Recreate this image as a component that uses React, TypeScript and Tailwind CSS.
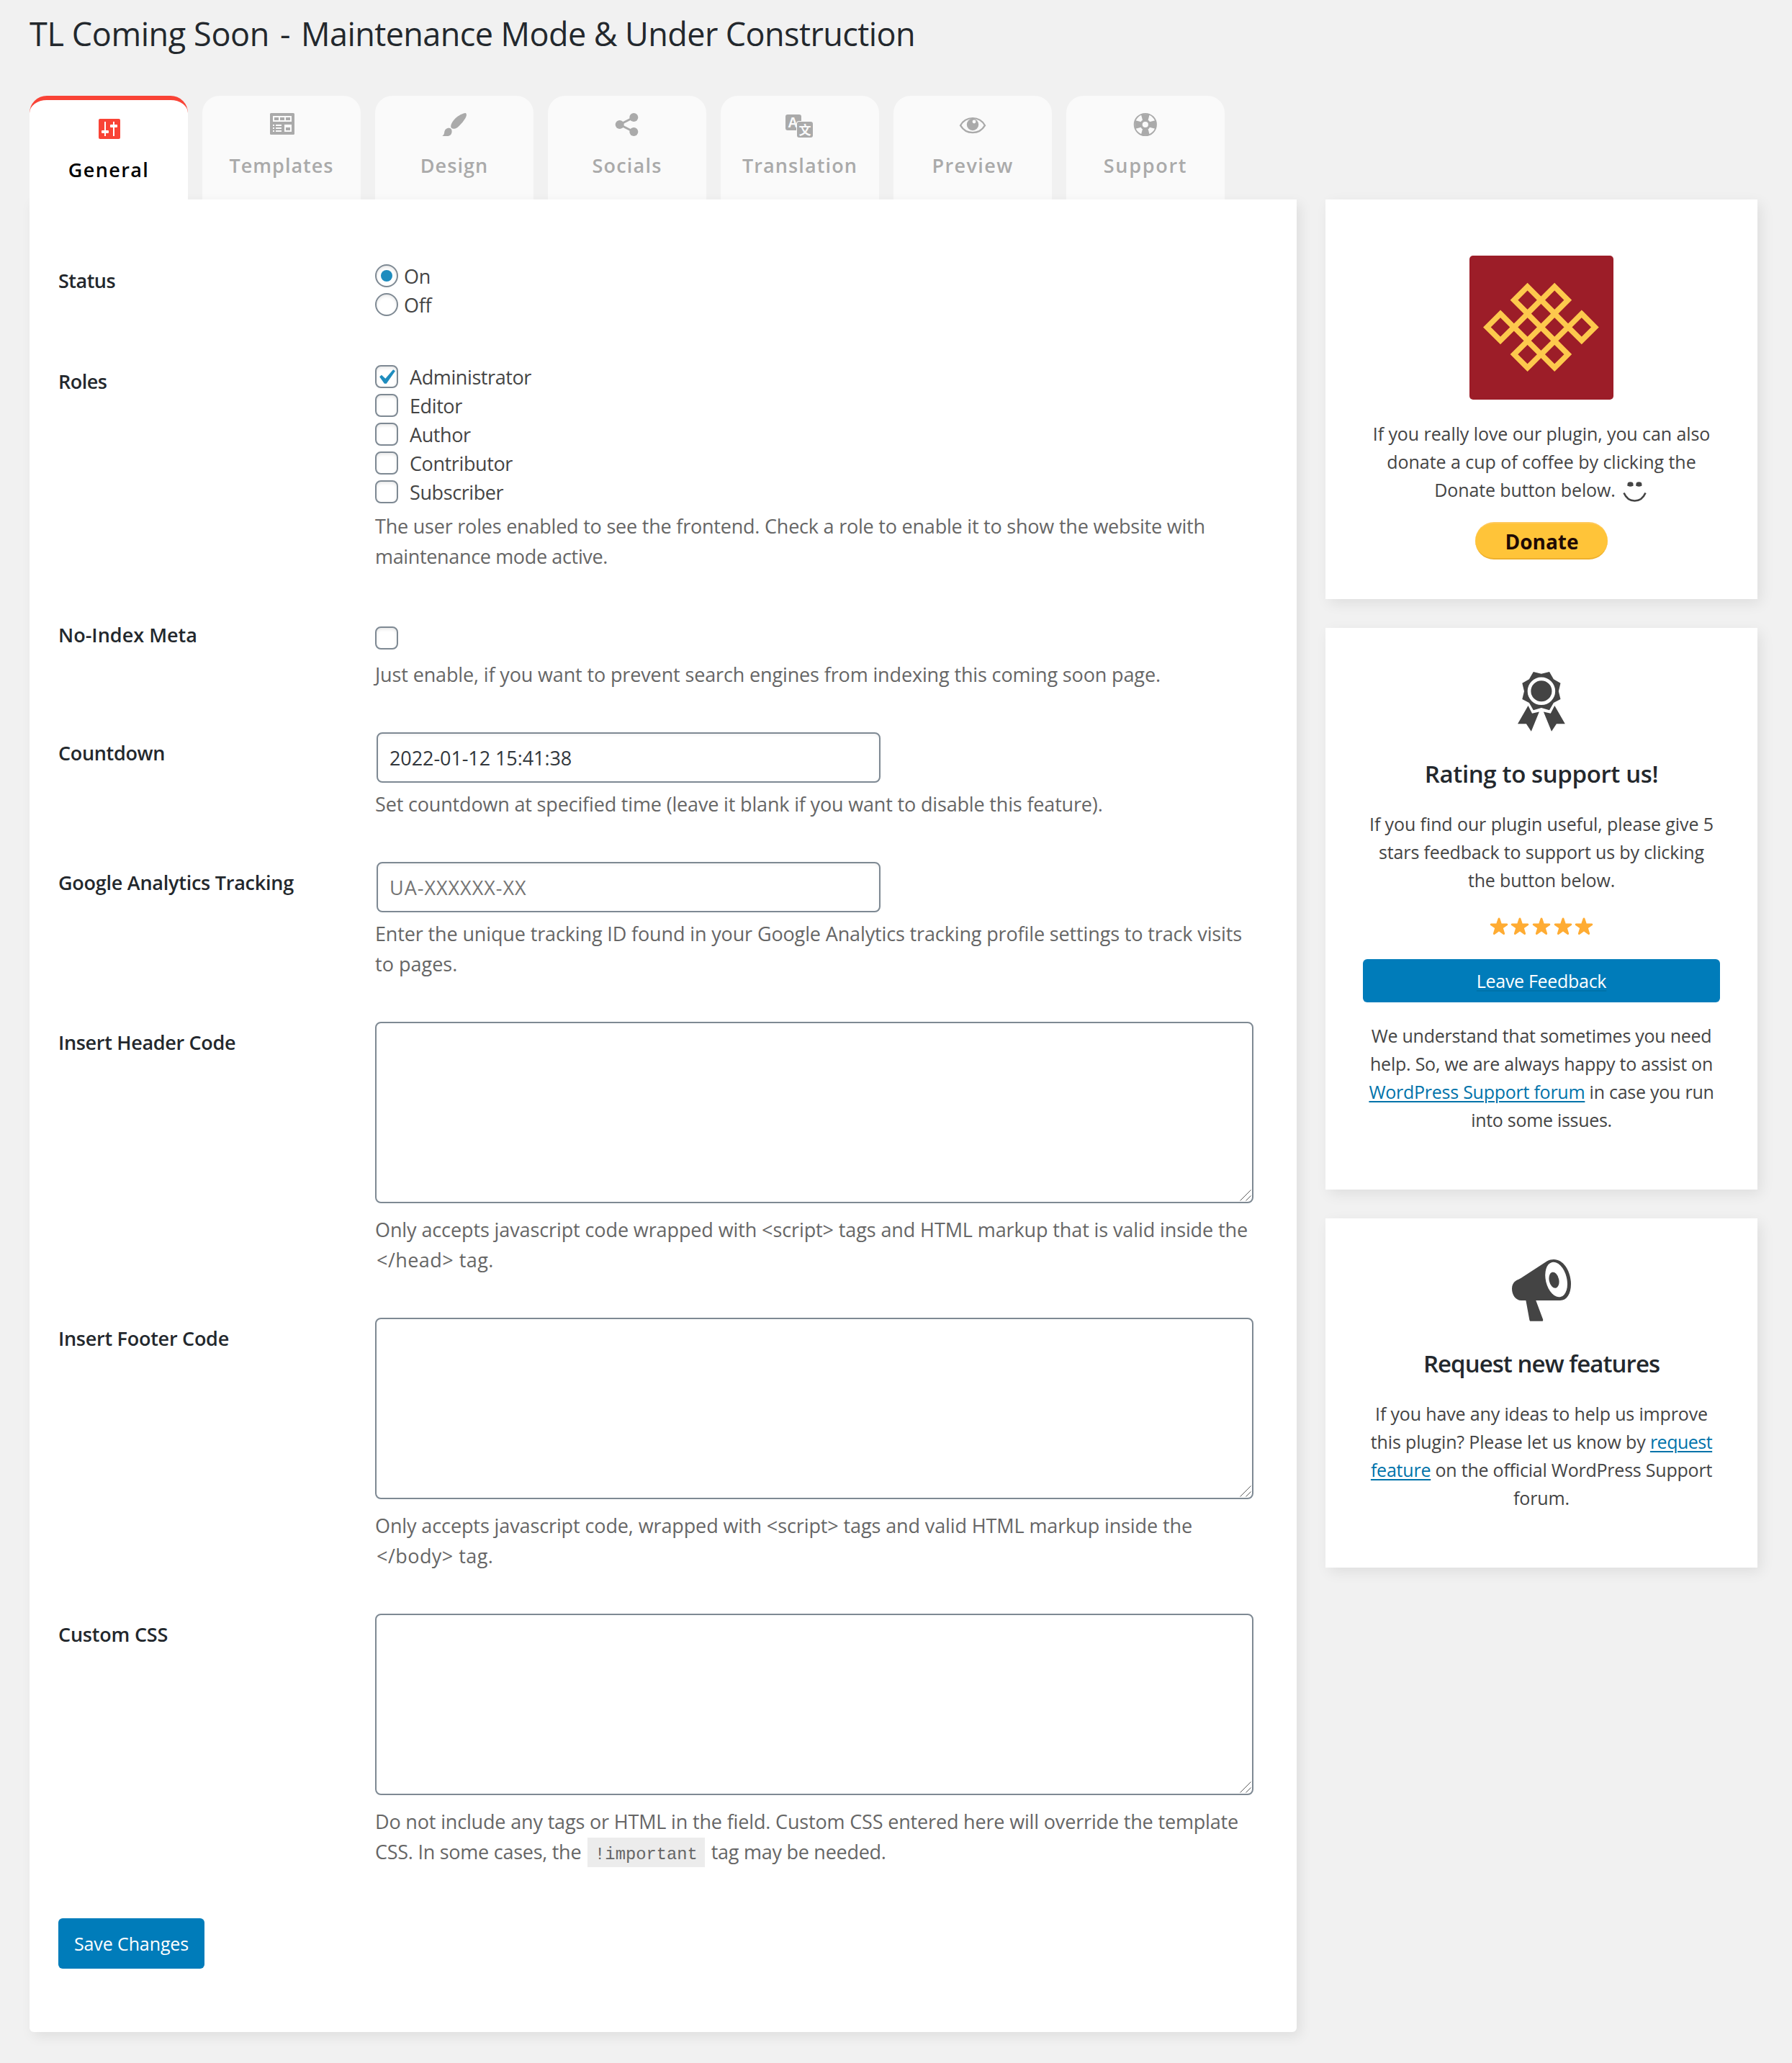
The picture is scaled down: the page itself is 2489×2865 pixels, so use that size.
import type { ReactNode } from "react";

const SHADOW = "shadow-[5px_6px_18px_rgba(0,0,0,0.08)]";

/* ---------- tab icons (40 x 40 grid) ---------- */

function Glyph({ children }: { children: ReactNode }) {
  return (
    <svg viewBox="0 0 40 40" className="size-10 shrink-0" fill="currentColor">
      {children}
    </svg>
  );
}

const SettingsGlyph = () => (
  <Glyph>
    <rect x="6" y="7" width="30" height="28" rx="2" />
    <g fill="#fff">
      <rect x="14" y="11" width="2" height="20" />
      <rect x="10" y="23" width="10" height="4" rx="1" />
      <rect x="26" y="11" width="2" height="20" />
      <rect x="22" y="15" width="10" height="4" rx="1" />
    </g>
  </Glyph>
);

const LayoutGlyph = () => (
  <Glyph>
    <rect x="4" y="5" width="34" height="30" rx="1.5" />
    <rect x="8" y="9" width="26" height="8" fill="#fafafa" />
    <rect x="10" y="11" width="6" height="4" />
    <rect x="18" y="11" width="6" height="4" />
    <rect x="26" y="11" width="6" height="4" />
    <g fill="#fafafa">
      <rect x="8" y="21" width="2" height="2" />
      <rect x="8" y="25" width="2" height="2" />
      <rect x="8" y="29" width="2" height="2" />
      <rect x="12" y="21" width="8" height="2" />
      <rect x="12" y="25" width="8" height="2" />
      <rect x="12" y="29" width="8" height="2" />
      <rect x="24" y="21" width="10" height="10" />
    </g>
    <rect x="26" y="25" width="6" height="4" />
  </Glyph>
);

const BrushGlyph = () => (
  <Glyph>
    <path d="M36.3 5.4c1.3 1.2.6 4.300-1.300 7.300-2 3.200-4.500 6.300-7 8.900-2.300 2.500-4.200 4.400-6.500 5-2.200.5-4.700.2-5.700-1-1-1.300-.7-3.500.3-5.800 1.200-2.700 3.300-5.500 6-8C25.600 8.500 34.500 3.700 36.300 5.400z" />
    <path d="M12.600 25.800c2.300 0 4 1.600 4 4.400 0 4-2.300 6.800-6.600 6.800H3.200c2-1.300 2.800-3 3-5.200.3-3.400 2.800-6 6.400-6z" />
  </Glyph>
);

const ShareGlyph = () => (
  <Glyph>
    <path d="M29.300 11L9.700 21l19.600 10" fill="none" stroke="currentColor" strokeWidth="3" />
    <circle cx="29.300" cy="11" r="6" />
    <circle cx="9.700" cy="21" r="6" />
    <circle cx="29.300" cy="31" r="6" />
  </Glyph>
);

const TranslateGlyph = () => (
  <Glyph>
    <rect x="0" y="7" width="22" height="22" rx="3" />
    <text x="10.300" y="25" textAnchor="middle" fontSize="19.500" fontWeight="700" fontFamily="Liberation Sans, sans-serif" fill="#fafafa">
      A
    </text>
    <rect x="15" y="16" width="24" height="24" rx="4" fill="#fafafa" />
    <rect x="16" y="17" width="22" height="22" rx="3" />
    <text x="27" y="34.500" textAnchor="middle" fontSize="17" fontWeight="700" fontFamily="Noto Sans CJK SC, sans-serif" fill="#fafafa">
      文
    </text>
  </Glyph>
);

const EyeGlyph = () => (
  <Glyph>
    <path d="M3 22.200C6.500 16 12.500 12.200 20 12.200S33.500 16 37 22.200C33.500 28.200 27.500 32.200 20 32.200S6.500 28.200 3 22.200z" fill="none" stroke="currentColor" strokeWidth="2.300" />
    <circle cx="20" cy="21" r="8.200" />
    <circle cx="22" cy="17" r="2.400" fill="#fafafa" />
  </Glyph>
);

const WHEEL = [0, 90, 180, 270];
const SosGlyph = () => (
  <Glyph>
    <circle cx="19.800" cy="21" r="15.200" fill="none" stroke="currentColor" strokeWidth="1.800" />
    {WHEEL.map((a) => (
      <path key={a} d="M13.800 6.500h12l-2.500 9.500h-7z" transform={`rotate(${a} 19.800 21)`} />
    ))}
    <circle cx="19.800" cy="21" r="7.300" />
    <circle cx="19.800" cy="21" r="4.100" fill="#fafafa" />
  </Glyph>
);

const TABS = [
  { label: "General", icon: <SettingsGlyph />, active: true, tracking: "tracking-[1.400px]" },
  { label: "Templates", icon: <LayoutGlyph />, tracking: "tracking-[1px]" },
  { label: "Design", icon: <BrushGlyph />, tracking: "tracking-[1.100px]" },
  { label: "Socials", icon: <ShareGlyph />, tracking: "tracking-[1.200px]" },
  { label: "Translation", icon: <TranslateGlyph />, tracking: "tracking-[1.100px]" },
  { label: "Preview", icon: <EyeGlyph />, tracking: "tracking-[1.400px]" },
  { label: "Support", icon: <SosGlyph />, tracking: "tracking-[1.700px]" },
];

function Tabs() {
  return (
    <nav className="flex gap-5">
      {TABS.map((t) => (
        <div
          key={t.label}
          className={
            t.active
              ? "relative z-10 flex h-36 w-[220px] flex-col items-center rounded-t-3xl border-t-[6px] border-[#f94336] bg-white pt-[19px]"
              : "flex h-36 w-[220px] flex-col items-center rounded-t-3xl bg-[#fafafa] pt-[19px]"
          }
        >
          <span className={t.active ? "text-[#f94336]" : "text-[#aaaaaa]"}>{t.icon}</span>
          <span className={`mt-5 text-[27px] leading-9 font-semibold ${t.tracking} ${t.active ? "text-black" : "text-[#aaaaaa]"}`}>{t.label}</span>
        </div>
      ))}
    </nav>
  );
}

/* ---------- form ---------- */

function Row({ label, className, labelClass, children }: { label: string; className: string; labelClass: string; children: ReactNode }) {
  return (
    <div className={`flex ${className}`}>
      <div className={`w-[440px] shrink-0 text-[27px] leading-[42px] font-semibold text-[#23282d] ${labelClass}`}>{label}</div>
      <div className="w-[1220px]">{children}</div>
    </div>
  );
}

function Line({ className = "tracking-[-0.150px]", children }: { className?: string; children: ReactNode }) {
  return <span className={`block whitespace-nowrap ${className}`}>{children}</span>;
}

function Description({ className, children }: { className: string; children: ReactNode }) {
  return <p className={`text-[27px] leading-[42px] text-[#666666] ${className}`}>{children}</p>;
}

function Radio({ label, checked }: { label: string; checked?: boolean }) {
  return (
    <div className="flex h-10 items-start">
      <span className="flex size-8 items-center justify-center rounded-full border-2 border-[#7e8993] bg-white shadow-[inset_0_2px_4px_rgba(0,0,0,0.1)]">
        {checked && <span className="size-4 rounded-full bg-[#1e8cbe]" />}
      </span>
      <span className="ml-2 text-[27px] leading-[34px] tracking-[-0.300px] text-[#444444]">{label}</span>
    </div>
  );
}

function Box({ checked }: { checked?: boolean }) {
  return (
    <span className="relative block size-8 shrink-0 rounded-lg border-2 border-[#7e8993] bg-white shadow-[inset_0_2px_4px_rgba(0,0,0,0.1)]">
      {checked && (
        <svg viewBox="0 0 20 20" className="absolute -top-[6px] -left-2 size-[42px] max-w-none" fill="#1e8cbe">
          <path d="M14.830 4.890l1.340.940-5.810 8.380H9.020L5.780 9.670l1.340-1.250 2.570 2.400z" />
        </svg>
      )}
    </span>
  );
}

const ROLES = [
  { name: "Administrator", checked: true },
  { name: "Editor" },
  { name: "Author" },
  { name: "Contributor" },
  { name: "Subscriber" },
];

function TextInput({ children, className }: { children: ReactNode; className: string }) {
  return (
    <div
      className={`ml-[2px] flex h-[70px] w-[700px] items-center rounded-lg border-2 border-[#7e8993] bg-white pt-[2px] pl-4 text-[27px] shadow-[inset_0_2px_4px_rgba(0,0,0,0.05)] ${className}`}
    >
      {children}
    </div>
  );
}

function TextArea() {
  return (
    <div className="relative h-[252px] w-[1220px] rounded-lg border-2 border-[#7e8993] bg-white">
      <svg viewBox="0 0 16 16" className="absolute right-px bottom-px size-4" fill="none" stroke="#5c5c5c" strokeWidth="1">
        <path d="M.500 15.500l15-15M8.500 15.500l7-7" />
      </svg>
    </div>
  );
}

function Form() {
  return (
    <section className={`relative h-[2545px] w-[1760px] shrink-0 rounded-b-md bg-white pt-[90px] pl-10 ${SHADOW}`}>
      <Row label="Status" className="" labelClass="mt-[2px] tracking-[-0.500px]">
        <Radio label="On" checked />
        <Radio label="Off" />
      </Row>

      <Row label="Roles" className="mt-[60px]" labelClass="mt-[2px] tracking-[-0.500px]">
        {ROLES.map((r) => (
          <div key={r.name} className="flex h-10 items-start">
            <Box checked={r.checked} />
            <span className="ml-4 text-[27px] leading-[34px] tracking-[-0.400px] text-[#444444]">{r.name}</span>
          </div>
        ))}
        <Description className="mt-[3px]">
          <Line className="tracking-[-0.215px]">The user roles enabled to see the frontend. Check a role to enable it to show the website with</Line>
          <Line className="tracking-[-0.350px]">maintenance mode active.</Line>
        </Description>
      </Row>

      <Row label="No-Index Meta" className="mt-[67px]" labelClass="tracking-[0.020px]">
        <div className="pt-[9px]">
          <Box />
        </div>
        <Description className="mt-[14px]">
          <Line className="tracking-[-0.137px]">Just enable, if you want to prevent search engines from indexing this coming soon page.</Line>
        </Description>
      </Row>

      <Row label="Countdown" className="mt-[59px]" labelClass="mt-[8px] tracking-[-0.320px]">
        <TextInput className="tracking-[-0.080px] text-[#32373c]">2022-01-12 15:41:38</TextInput>
        <Description className="mt-[9px]">
          <Line className="tracking-[-0.165px]">Set countdown at specified time (leave it blank if you want to disable this feature).</Line>
        </Description>
      </Row>

      <Row label="Google Analytics Tracking" className="mt-[59px]" labelClass="mt-[8px] tracking-[-0.250px]">
        <TextInput className="tracking-[0.980px] text-[#757575]">UA-XXXXXX-XX</TextInput>
        <Description className="mt-[9px]">
          <Line className="tracking-[-0.134px]">Enter the unique tracking ID found in your Google Analytics tracking profile settings to track visits</Line>
          <Line className="tracking-[0.020px]">to pages.</Line>
        </Description>
      </Row>

      <Row label="Insert Header Code" className="mt-[59px]" labelClass="mt-[8px] tracking-[-0.320px]">
        <TextArea />
        <Description className="mt-4">
          <Line className="tracking-[-0.107px]">Only accepts javascript code wrapped with &lt;script&gt; tags and HTML markup that is valid inside the</Line>
          <Line className="pl-[2px] tracking-[0.450px]">&lt;/head&gt; tag.</Line>
        </Description>
      </Row>

      <Row label="Insert Footer Code" className="mt-[59px]" labelClass="mt-[8px] tracking-[-0.260px]">
        <TextArea />
        <Description className="mt-4">
          <Line className="tracking-[-0.110px]">Only accepts javascript code, wrapped with &lt;script&gt; tags and valid HTML markup inside the</Line>
          <Line className="pl-[2px] tracking-[0.450px]">&lt;/body&gt; tag.</Line>
        </Description>
      </Row>

      <Row label="Custom CSS" className="mt-[59px]" labelClass="mt-[8px] tracking-[-0.200px]">
        <TextArea />
        <Description className="mt-4">
          <Line className="tracking-[-0.165px]">Do not include any tags or HTML in the field. Custom CSS entered here will override the template</Line>
          <Line className="tracking-[-0.260px]">
            CSS. In some cases, the{" "}
            <code className="mx-[2px] bg-[#ececec] px-[10px] pt-[10px] pb-1 font-['Liberation_Mono',monospace] text-[23.800px] tracking-normal">!important</code>{" "}
            tag may be needed.
          </Line>
        </Description>
      </Row>

      <button className="mt-[67px] flex h-[70px] w-[203px] items-center justify-center rounded-md bg-[#007cba] pt-px text-[25px] tracking-[-0.100px] text-white">
        Save Changes
      </button>
    </section>
  );
}

/* ---------- sidebar ---------- */

const KNOT: [number, number][] = [
  [80.6, 61.7],
  [118.2, 61.7],
  [43, 99.4],
  [80.6, 99.4],
  [118.2, 99.4],
  [155.8, 99.4],
  [80.6, 137.1],
  [118.2, 137.1],
];

const KnotLogo = () => (
  <svg viewBox="0 0 200 200" className="size-[200px] rounded-[5px] bg-[#9c1d28]" fill="none" stroke="#fdc94d" strokeWidth="7.600">
    {KNOT.map(([x, y]) => (
      <path key={`${x}-${y}`} d={`M${x} ${y - 18.6}l18.600 18.600-18.600 18.600-18.600-18.600z`} />
    ))}
  </svg>
);

const Smiley = () => (
  <svg viewBox="0 0 33 28" className="ml-[10px] inline-block h-7 w-[33px] -translate-y-[2px] align-[-9px]">
    <path d="M6.400 6a4.050 5 0 018.100 0zM18.300 6a4.050 5 0 018.100 0z" fill="#444" />
    <path d="M1.500 15.500c3 7 8.500 11 15 11s12-4 15-11" fill="none" stroke="#444" strokeWidth="2.600" />
    <ellipse cx="10.500" cy="3.500" rx="4" ry="3.300" fill="#444" />
    <ellipse cx="22.400" cy="3.500" rx="4" ry="3.300" fill="#444" />
  </svg>
);

const AwardIcon = () => (
  <svg viewBox="0 0 66 83" className="h-[83px] w-[66px]" fill="#444">
    <path d="M21.800 0L32.900 2.700 44 0l5.900 10.300 9.600 5.400-2.700 11.200 2.700 11-9.600 5L44 53.200l-11.100-3.100-11.100 3.100-5.900-10.300-9.600-5L9 26.900 6.300 15.700l9.600-5.400z" />
    <circle cx="32.900" cy="26.800" r="16.900" fill="none" stroke="#fff" strokeWidth="4.700" />
    <path d="M14.500 47.100L20 57.800l9.900-2.300-11.100 27.200-6.900-10.400H0zM51.300 47.100l-5.500 10.700-9.900-2.300L47 82.700l6.900-10.400h11.900z" />
  </svg>
);

const MegaphoneIcon = () => (
  <svg viewBox="0 0 82 86" className="h-[86px] w-[82px]" fill="#444">
    <path d="M5 30c2.500-1.700 5-2.600 7.500-4L48.600 2.500C52 .700 55 0 58 0c14 0 24 17 24 34 0 14-6 23-15 23H13C5 57 0 49 0 40.500 0 35.500 2 32 5 30z" />
    <ellipse cx="61.600" cy="28" rx="14.600" ry="24.800" transform="rotate(-14 61.600 28)" fill="#fff" />
    <ellipse cx="58.500" cy="28.800" rx="6.800" ry="11.200" transform="rotate(-12 58.500 28.800)" />
    <path d="M19.200 56h13.700l10.200 27.200c.4 1.600-.1 2.600-1.400 2.600H26c-1 0-1.500-.8-1.700-2.100z" />
  </svg>
);

const Star = () => (
  <svg viewBox="0 0 36 36" className="mx-[1.800px] size-[26px]" fill="#ffac33">
    <path d="M27.287 34.627c-.404 0-.806-.124-1.152-.371L18 28.422l-8.135 5.834c-.343.247-.746.370-1.150.370-.404 0-.811-.127-1.154-.377-.684-.494-.968-1.374-.709-2.173l3.034-9.792-8.062-5.681c-.684-.502-.967-1.389-.700-2.195.266-.804 1.020-1.351 1.870-1.360l9.947-.015 3.213-9.548c.270-.803 1.023-1.344 1.871-1.344.845 0 1.600.542 1.869 1.344l3.154 9.548 10.002.015c.850.009 1.604.556 1.869 1.360.267.806-.016 1.693-.700 2.195l-8.062 5.681 3.034 9.792c.260.800-.024 1.679-.709 2.173-.344.250-.750.378-1.155.378z" />
  </svg>
);

function Card({ className, children }: { className: string; children: ReactNode }) {
  return <section className={`flex w-[600px] flex-col items-center bg-white px-[52px] text-center text-[#444444] ${SHADOW} ${className}`}>{children}</section>;
}

function Link({ children }: { children: ReactNode }) {
  return <a className="text-[#0073aa] underline decoration-2 underline-offset-[3px]">{children}</a>;
}

function Sidebar() {
  return (
    <aside className="flex flex-col gap-10">
      <Card className="h-[555px] pt-[78px]">
        <KnotLogo />
        <p className="mt-[28px] h-[117px] text-[25px] leading-[39px]">
          <Line className="tracking-[-0.080px]">If you really love our plugin, you can also</Line>
          <Line className="tracking-[-0.040px]">donate a cup of coffee by clicking the</Line>
          <span className="block h-[39px] pr-[3px] whitespace-nowrap tracking-[-0.115px]">
            Donate button below.
            <Smiley />
          </span>
        </p>
        <div className="mt-[25px] flex h-[52px] w-[184px] items-center justify-center rounded-full border-t-2 border-b-2 border-t-[#ffc95c] border-b-[#eeb02d] bg-[#ffc439] pt-px pl-px text-[28px] font-bold text-[#1f0a05]">
          Donate
        </div>
      </Card>

      <Card className="h-[780px] pt-[61px]">
        <AwardIcon />
        <h3 className="mt-[37px] text-[33px] leading-[44px] font-semibold tracking-[-0.380px] text-[#23282d]">Rating to support us!</h3>
        <p className="mt-[28px] text-[25px] leading-[39px]">
          <Line className="tracking-[-0.100px]">If you find our plugin useful, please give 5</Line>
          <Line>stars feedback to support us by clicking</Line>
          <Line>the button below.</Line>
        </p>
        <div className="mt-[31px] flex h-[26px]">
          <Star />
          <Star />
          <Star />
          <Star />
          <Star />
        </div>
        <a className="mt-[33px] flex h-[60px] w-[496px] items-center justify-center rounded-md bg-[#007cba] pt-[2px] text-[25px] tracking-[-0.300px] text-white">
          <span className="underline decoration-[#0073aa] decoration-2 underline-offset-[3px]">Leave Feedback</span>
        </a>
        <p className="mt-[27px] text-[25px] leading-[39px]">
          <Line className="tracking-[-0.260px]">We understand that sometimes you need</Line>
          <Line className="tracking-[-0.230px]">help. So, we are always happy to assist on</Line>
          <Line className="tracking-[-0.250px]">
            <Link>WordPress Support forum</Link> in case you run
          </Line>
          <Line className="tracking-[-0.300px]">into some issues.</Line>
        </p>
      </Card>

      <Card className="h-[485px] pt-[57px]">
        <MegaphoneIcon />
        <h3 className="mt-[37px] text-[33px] leading-[44px] font-semibold tracking-[-0.950px] text-[#23282d]">Request new features</h3>
        <p className="mt-[28px] text-[25px] leading-[39px]">
          <Line>If you have any ideas to help us improve</Line>
          <Line>
            this plugin? Please let us know by <Link><span className="tracking-[-0.500px]">request</span></Link>
          </Line>
          <Line className="tracking-[-0.220px]">
            <Link>feature</Link> on the official WordPress Support
          </Line>
          <Line>forum.</Line>
        </p>
      </Card>
    </aside>
  );
}

export default function App() {
  return (
    <div className="h-[2865px] w-[2489px] overflow-hidden bg-[#f1f1f1] pt-[19px] pl-[41px] font-['Open_Sans',sans-serif]">
      <h1 className="h-14 text-[45px] leading-[56px] tracking-[-0.580px] whitespace-nowrap text-[#23282d]">
        <span className="tracking-[-0.400px]">TL Coming Soon</span> <span className="mx-1">-</span> Maintenance Mode &amp; Under Construction
      </h1>
      <div className="mt-[58px]">
        <Tabs />
        <div className="flex items-start gap-10">
          <Form />
          <Sidebar />
        </div>
      </div>
    </div>
  );
}
